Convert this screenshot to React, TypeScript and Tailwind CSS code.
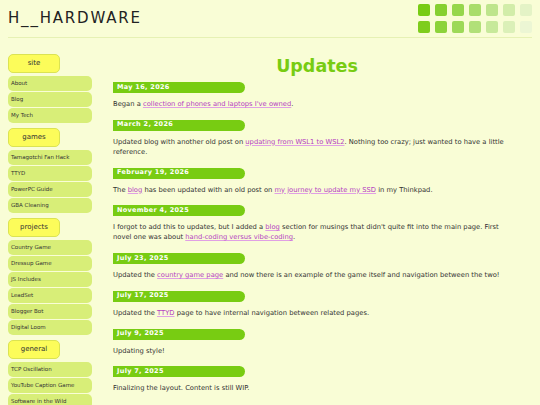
import type { ReactNode } from "react";

const nav = [
  { title: "site", items: ["About", "Blog", "My Tech"] },
  { title: "games", items: ["Tamagotchi Fan Hack", "TTYD", "PowerPC Guide", "GBA Cleaning"] },
  {
    title: "projects",
    items: ["Country Game", "Dressup Game", "JS Includes", "LeadSet", "Blogger Bot", "Digital Loom"],
  },
  { title: "general", items: ["TCP Oscillation", "YouTube Caption Game", "Software in the Wild"] },
];

const squares = [
  ["#78cc12", "#86d030", "#96d74c", "#a9dd69", "#bee58c", "#d2eda9", "#e4f3c6"],
  ["#7ecd1c", "#8cd33a", "#9dd957", "#b1e078", "#c7e99a", "#dbf0b8", "#ecf6d4"],
];

function A({ children }: { children: ReactNode }) {
  return (
    <a href="#" className="text-[#b53ec2] underline decoration-[#e0a0e4] underline-offset-1">
      {children}
    </a>
  );
}

const updates: { date: string; body: ReactNode }[] = [
  { date: "May 16, 2026", body: <>Began a <A>collection of phones and laptops I've owned</A>.</> },
  {
    date: "March 2, 2026",
    body: (
      <>
        Updated blog with another old post on <A>updating from WSL1 to WSL2</A>. Nothing too crazy; just
        wanted to have a little reference.
      </>
    ),
  },
  {
    date: "February 19, 2026",
    body: (
      <>
        The <A>blog</A> has been updated with an old post on <A>my journey to update my SSD</A> in my
        Thinkpad.
      </>
    ),
  },
  {
    date: "November 4, 2025",
    body: (
      <>
        I forgot to add this to updates, but I added a <A>blog</A> section for musings that didn't quite
        fit into the main page. First novel one was about <A>hand-coding versus vibe-coding</A>.
      </>
    ),
  },
  {
    date: "July 23, 2025",
    body: (
      <>
        Updated the <A>country game page</A> and now there is an example of the game itself and
        navigation between the two!
      </>
    ),
  },
  {
    date: "July 17, 2025",
    body: <>Updated the <A>TTYD</A> page to have internal navigation between related pages.</>,
  },
  { date: "July 9, 2025", body: <>Updating style!</> },
  { date: "July 7, 2025", body: <>Finalizing the layout. Content is still WIP.</> },
];

export default function App() {
  return (
    <div className="min-h-screen bg-[#f9fdd6] px-[8px] font-['DejaVu_Sans',sans-serif] text-[#333]">
      <header className="flex h-[38px] items-start justify-between border-b border-[#e6f1b4]">
        <h1 className="pt-[8px] text-[15px] leading-[20px] tracking-[1.8px] text-[#222]">H__HARDWARE</h1>
        <div className="flex flex-col gap-[5px] pt-[4px]">
          {squares.map((row, r) => (
            <div key={r} className="flex gap-[5px]">
              {row.map((c, i) => (
                <div key={i} className="h-[12px] w-[12px] rounded-[2px]" style={{ backgroundColor: c }} />
              ))}
            </div>
          ))}
        </div>
      </header>

      <div className="flex pt-[16px]">
        <nav className="flex w-[84px] shrink-0 flex-col">
          {nav.map((g, gi) => (
            <div key={g.title} className={gi > 0 ? "mt-[4px]" : ""}>
              <div className="mb-[3px] flex h-[19px] w-[52px] items-center justify-center rounded-[5px] border border-[#dbe352] bg-[#fcfc5a] text-[7px] text-[#333]">
                {g.title}
              </div>
              {g.items.map((it) => (
                <div
                  key={it}
                  className="mb-[1px] flex h-[15px] items-center rounded-[5px] bg-[#d8ee78] pl-[3px] text-[5.5px] text-[#333]"
                >
                  {it}
                </div>
              ))}
            </div>
          ))}
        </nav>

        <main className="ml-[21px] flex-1 pr-[16px]">
          <h2 className="pl-[5px] text-center text-[17.5px] font-bold leading-[24px] text-[#78cc12]">Updates</h2>
          <div className="mt-[4px] flex flex-col">
            {updates.map((u) => (
              <section key={u.date} className="mb-[10.75px]">
                <div className="flex h-[11px] w-[132px] items-center rounded-r-full rounded-l-[1px] bg-[#78cc12] pl-[4px] text-[6.5px] font-bold tracking-[0.3px] text-white">
                  {u.date}
                </div>
                <p className="mt-[6px] text-[6.75px] leading-[10px]">{u.body}</p>
              </section>
            ))}
          </div>
        </main>
      </div>
    </div>
  );
}
